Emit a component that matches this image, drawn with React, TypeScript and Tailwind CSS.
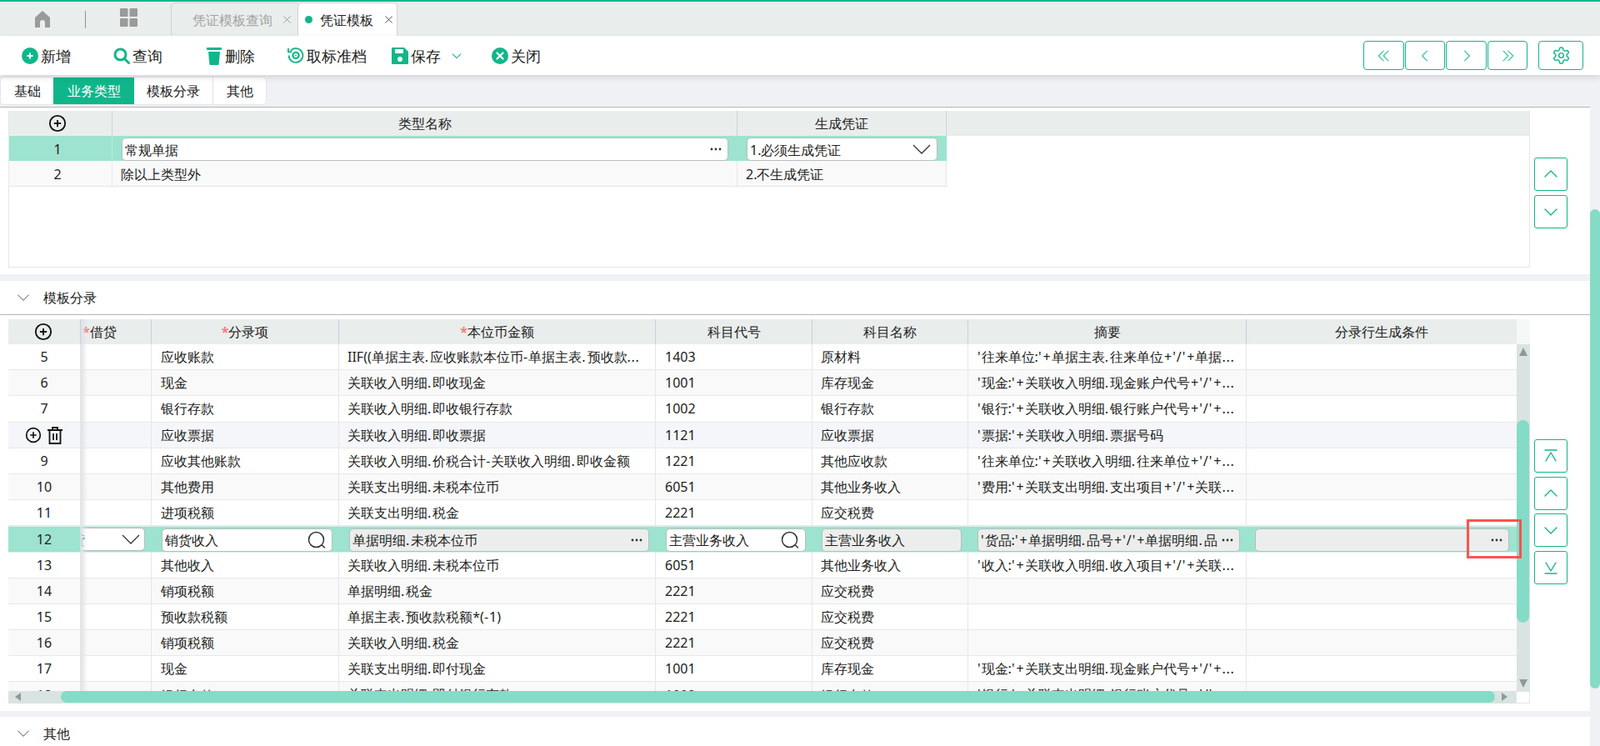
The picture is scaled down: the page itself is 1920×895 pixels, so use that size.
import React from "react";

const cols = "grid-cols-[87px_85px_225px_380px_188px_187px_334px_324px]";

type R = [string, string, string, string, string, string];
const rows: R[] = [
  ["5", "应收账款", "IIF((单据主表.应收账款本位币-单据主表.预收款...", "1403", "原材料", "'往来单位:'+单据主表.往来单位+'/'+单据..."],
  ["6", "现金", "关联收入明细.即收现金", "1001", "库存现金", "'现金:'+关联收入明细.现金账户代号+'/'+..."],
  ["7", "银行存款", "关联收入明细.即收银行存款", "1002", "银行存款", "'银行:'+关联收入明细.银行账户代号+'/'+..."],
  ["8", "应收票据", "关联收入明细.即收票据", "1121", "应收票据", "'票据:'+关联收入明细.票据号码"],
  ["9", "应收其他账款", "关联收入明细.价税合计-关联收入明细.即收金额", "1221", "其他应收款", "'往来单位:'+关联收入明细.往来单位+'/'+..."],
  ["10", "其他费用", "关联支出明细.未税本位币", "6051", "其他业务收入", "'费用:'+关联支出明细.支出项目+'/'+关联..."],
  ["11", "进项税额", "关联支出明细.税金", "2221", "应交税费", ""],
  ["12", "", "", "", "", ""],
  ["13", "其他收入", "关联收入明细.未税本位币", "6051", "其他业务收入", "'收入:'+关联收入明细.收入项目+'/'+关联..."],
  ["14", "销项税额", "单据明细.税金", "2221", "应交税费", ""],
  ["15", "预收款税额", "单据主表.预收款税额*(-1)", "2221", "应交税费", ""],
  ["16", "销项税额", "关联收入明细.税金", "2221", "应交税费", ""],
  ["17", "现金", "关联支出明细.即付现金", "1001", "库存现金", "'现金:'+关联支出明细.现金账户代号+'/'+..."],
  ["18", "银行存款", "关联支出明细.即付银行存款", "1002", "银行存款", "'银行:'+关联支出明细.银行账户代号+'/'+..."],
];

const Sym = ({ t }: { t: string }) => (
  <>
    {t.split(/(\.\.\.|\+|'|\/|\.|-)/).map((s, i) => {
      if (s === "+") return <span key={i} className="mx-px">{s}</span>;
      if (s === "'" || s === "/" || s === "-") return <span key={i} className="mr-px">{s}</span>;
      if (s === ".") return <span key={i} className="mr-[2px]">{s}</span>;
      if (s === "...") return <span key={i} className="tracking-[0.7px]">{s}</span>;
      return s;
    })}
  </>
);

const Line = ({ d, size = 20, sw = 1.4, color = "#19bd93" }: { d: string; size?: number; sw?: number; color?: string }) => (
  <svg width={size} height={size} viewBox="0 0 24 24" fill="none" stroke={color} strokeWidth={sw} strokeLinecap="round" strokeLinejoin="round">
    <path d={d} />
  </svg>
);

const PlusC = ({ size = 22 }: { size?: number }) => (
  <svg width={size} height={size} viewBox="0 0 24 24" fill="none" stroke="#111" strokeWidth="2">
    <circle cx="12" cy="12" r="10" />
    <path d="M12 7.5v9M7.5 12h9" />
  </svg>
);

const Dots = () => (
  <svg width="16" height="4" viewBox="0 0 16 4" fill="#333" className="shrink-0">
    <circle cx="3" cy="2" r="1.4" />
    <circle cx="8" cy="2" r="1.4" />
    <circle cx="13" cy="2" r="1.4" />
  </svg>
);

const Glass = () => (
  <svg width="24" height="24" viewBox="0 0 24 24" fill="none" stroke="#333" strokeWidth="1.5" strokeLinecap="round" className="shrink-0">
    <circle cx="11.5" cy="11.5" r="9" />
    <path d="M18.5 18l3 3" />
  </svg>
);

const Chev = ({ size = 24 }: { size?: number }) => (
  <svg width={size} height={size} viewBox="0 0 24 24" fill="none" stroke="#333" strokeWidth="1.3" className="shrink-0">
    <path d="M2 7l10 10 10-10" />
  </svg>
);

const Field = ({ x, w, grey, children }: { x: number; w: number; grey?: boolean; children?: React.ReactNode }) => (
  <div
    className={`absolute top-[2px] h-[28px] flex items-center pl-[3px] pr-[6px] gap-1 rounded-[5px] border border-[#b9bdbc] whitespace-nowrap overflow-hidden ${grey ? "bg-[#eceeed]" : "bg-white"}`}
    style={{ left: x, width: w }}
  >
    {children}
  </div>
);

const SideBtn = ({ d, top }: { d: string; top: number }) => (
  <button className="absolute left-[1841px] w-[40px] h-[40px] flex items-center justify-center rounded-[3px] border border-[#10b68a] bg-white" style={{ top }}>
    <Line d={d} size={24} sw={1.4} color="#10b68a" />
  </button>
);

const NavBtn = ({ d, w = "w-[49px]" }: { d: string; w?: string }) => (
  <button className={`${w} h-[35px] flex items-center justify-center rounded-[4px] border border-[#10b68a] bg-white`}>
    <Line d={d} size={20} sw={1.3} color="#2cc39b" />
  </button>
);

const Tool = ({ w, icon, label, extra }: { w: string; icon: React.ReactNode; label: string; extra?: React.ReactNode }) => (
  <div className={`${w} flex items-center h-full text-[18px] text-[#222]`}>
    <span className="w-[20px] h-[20px] mr-[3px] flex items-center justify-center shrink-0">{icon}</span>
    <span>{label}</span>
    {extra}
  </div>
);

const G = "#10b68a";

export default function App() {
  return (
    <div className="relative w-[1920px] h-[895px] overflow-hidden bg-[#eff1f5] text-[16px] leading-none text-[#222] font-['Noto_Sans_CJK_SC','Noto_Sans',sans-serif]">
      {/* tab strip */}
      <div className="h-[43px] border-t-[2px] border-[#10b68a] bg-[#e9edec] flex items-end">
        <svg className="ml-[41px] mb-[9px]" width="20" height="22" viewBox="0 0 20 22" fill="#9a9a9a">
          <path d="M10 1L1 9v12h6v-6a3 3 0 016 0v6h6V9z" />
        </svg>
        <div className="ml-[41px] mb-[9px] w-px h-[21px] bg-[#8f9392]" />
        <svg className="ml-[41px] mb-[11px]" width="21" height="22" viewBox="0 0 21 22" fill="#9a9a9a">
          <rect x="0" y="0" width="9.5" height="10" rx="1" />
          <rect x="11.5" y="0" width="9.5" height="10" rx="1" />
          <rect x="0" y="12" width="9.5" height="10" rx="1" />
          <rect x="11.5" y="12" width="9.5" height="10" rx="1" />
        </svg>
        <div className="ml-[40px] w-[152px] h-[40px] flex items-center pl-[25px] rounded-tl-[5px] border-l border-t border-[#d0d4d4] text-[#a1a3a3]">
          <span>凭证模板查询</span>
          <span className="ml-[11px]">
            <Line d="M5 5l14 14M19 5L5 19" size={13} sw={1.5} color="#888" />
          </span>
        </div>
        <div className="w-[120px] h-[40px] flex items-center pl-[8px] rounded-t-[5px] border-x border-t border-[#d0d4d4] bg-white text-[#222]">
          <span className="w-[9px] h-[9px] rounded-full bg-[#10b68a] mr-[9px]" />
          <span>凭证模板</span>
          <span className="ml-[12px]">
            <Line d="M5 5l14 14M19 5L5 19" size={13} sw={1.5} color="#333" />
          </span>
        </div>
      </div>

      {/* toolbar */}
      <div className="relative z-10 h-[47px] bg-white flex items-center pl-[26px] pr-[20px] shadow-[0_3px_7px_rgba(40,44,60,0.14)]">
        <Tool
          w="w-[110px]"
          label="新增"
          icon={
            <svg width="20" height="20" viewBox="0 0 20 20">
              <circle cx="10" cy="10" r="10" fill={G} />
              <path d="M10 6.5v7M6.5 10h7" stroke="#fff" strokeWidth="2" />
            </svg>
          }
        />
        <Tool
          w="w-[111px]"
          label="查询"
          icon={
            <svg width="20" height="20" viewBox="0 0 20 20" fill="none" stroke={G} strokeWidth="3" strokeLinecap="round">
              <circle cx="8.5" cy="8.5" r="6.5" />
              <path d="M13.5 13.5l5 5" />
            </svg>
          }
        />
        <Tool
          w="w-[98px]"
          label="删除"
          icon={
            <svg width="20" height="22" viewBox="0 0 20 22" fill={G}>
              <rect x="1" y="1" width="18" height="3" rx="1" />
              <path d="M3 6h14l-1.4 15a1 1 0 01-1 1H5.4a1 1 0 01-1-1z" />
            </svg>
          }
        />
        <Tool
          w="w-[125px]"
          label="取标准档"
          icon={
            <svg width="21" height="21" viewBox="0 0 21 21" fill="none" stroke={G} strokeWidth="2">
              <path d="M4 4.5A8.8 8.8 0 1 1 1.7 10.5" />
              <path d="M1 1.5V6h4.5" />
              <circle cx="10.5" cy="10.5" r="3.8" strokeWidth="2.4" />
              <circle cx="10.5" cy="10.5" r="1" fill={G} stroke="none" />
            </svg>
          }
        />
        <Tool
          w="w-[120px]"
          label="保存"
          icon={
            <svg width="20" height="20" viewBox="0 0 20 20">
              <path d="M1 0h14l5 5v14a1 1 0 01-1 1H1a1 1 0 01-1-1V1a1 1 0 011-1z" fill={G} />
              <rect x="4" y="2" width="10" height="5" fill="#fff" />
              <circle cx="10" cy="14" r="3" fill="#fff" />
            </svg>
          }
          extra={
            <span className="ml-[11px]">
              <Line d="M5 9l7 7 7-7" size={16} sw={1.6} color="#1fbf95" />
            </span>
          }
        />
        <Tool
          w="w-[100px]"
          label="关闭"
          icon={
            <svg width="20" height="20" viewBox="0 0 20 20">
              <circle cx="10" cy="10" r="10" fill={G} />
              <path d="M6.5 6.5l7 7M13.5 6.5l-7 7" stroke="#fff" strokeWidth="2.2" strokeLinecap="round" />
            </svg>
          }
        />
        <div className="ml-auto flex items-center gap-px">
          <NavBtn d="M11 5l-7 7 7 7M18 5l-7 7 7 7" />
          <NavBtn d="M15 5l-7 7 7 7" w="w-[48px]" />
          <NavBtn d="M9 5l7 7-7 7" w="w-[49px]" />
          <NavBtn d="M6 5l7 7-7 7M13 5l7 7-7 7" w="w-[48px]" />
          <button className="ml-[12px] w-[54px] h-[35px] flex items-center justify-center rounded-[4px] border border-[#10b68a] bg-white">
            <svg width="23" height="23" viewBox="0 0 24 24" fill="none" stroke="#10b68a" strokeWidth="1.5" strokeLinejoin="round">
              <path d="M12.22 2h-.44a2 2 0 0 0-2 2v.18a2 2 0 0 1-1 1.73l-.43.25a2 2 0 0 1-2 0l-.15-.08a2 2 0 0 0-2.73.73l-.22.38a2 2 0 0 0 .73 2.73l.15.1a2 2 0 0 1 1 1.72v.51a2 2 0 0 1-1 1.74l-.15.09a2 2 0 0 0-.73 2.73l.22.38a2 2 0 0 0 2.73.73l.15-.08a2 2 0 0 1 2 0l.43.25a2 2 0 0 1 1 1.73V20a2 2 0 0 0 2 2h.44a2 2 0 0 0 2-2v-.18a2 2 0 0 1 1-1.73l.43-.25a2 2 0 0 1 2 0l.15.08a2 2 0 0 0 2.73-.73l.22-.39a2 2 0 0 0-.73-2.73l-.15-.08a2 2 0 0 1-1-1.74v-.5a2 2 0 0 1 1-1.74l.15-.09a2 2 0 0 0 .73-2.73l-.22-.38a2 2 0 0 0-2.73-.73l-.15.08a2 2 0 0 1-2 0l-.43-.25a2 2 0 0 1-1-1.73V4a2 2 0 0 0-2-2z" />
              <circle cx="12" cy="12" r="3" />
            </svg>
          </button>
        </div>
      </div>

      {/* sub tabs */}
      <div className="h-[39px] w-[1908px] border-b border-[#b5b5b5] pt-[2px]">
        <div className="inline-flex h-[34px] items-stretch rounded-[5px] bg-white border border-[#e3e5e9] overflow-hidden">
          <div className="w-[63px] flex items-center justify-center">基础</div>
          <div className="w-[97px] flex items-center justify-center bg-[#10b68a] text-white">业务类型</div>
          <div className="w-[95px] flex items-center justify-center border-r border-[#e0e2e6]">模板分录</div>
          <div className="w-[63px] flex items-center justify-center">其他</div>
        </div>
      </div>

      {/* section one */}
      <div className="relative w-[1908px] h-[200px] bg-white">
        <div className="absolute left-[10px] top-[4px] w-[1826px] h-[188px] border-x border-b border-[#e6e6e6]">
          <div className="h-[30px] bg-[#e9edec] grid grid-cols-[124px_750px_251px] w-[1824px]">
            <div className="flex items-center justify-center pr-[7px] border-r border-[#ccd2dc]"><PlusC /></div>
            <div className="flex items-center justify-center border-r border-[#ccd2dc]">类型名称</div>
            <div className="flex items-center justify-center border-r border-[#ccd2dc]">生成凭证</div>
          </div>
          <div className="relative h-[30px] w-[1125px] bg-[#9de3cf]">
            <div className="w-[124px] h-full flex items-center justify-center pr-[7px] pt-[2px] border-r border-[#bfeadd]">1</div>
            <Field x={135} w={728}>
              <span className="flex-1 pt-[1px]">常规单据</span>
              <Dots />
            </Field>
            <Field x={885} w={229}>
              <span className="flex-1 pt-[1px]">1.必须生成凭证</span>
              <Chev />
            </Field>
          </div>
          <div className="h-[31px] w-[1125px] bg-[#f9f9f9] grid grid-cols-[124px_750px_251px] border-b border-[#e6e6e6]">
            <div className="flex items-center justify-center pr-[7px] pt-[2px] border-r border-[#e6e6e6]">2</div>
            <div className="flex items-center pl-[10px] pt-[2px] border-r border-[#e6e6e6]">除以上类型外</div>
            <div className="flex items-center pl-[10px] pt-[2px] border-r border-[#e6e6e6]">2.不生成凭证</div>
          </div>
        </div>
        <SideBtn top={60} d="M5 15l7-7 7 7" />
        <SideBtn top={105} d="M5 9l7 7 7-7" />
      </div>

      {/* section two */}
      <div className="absolute left-0 top-[337px] w-[1908px] h-[516px] bg-white">
        <div className="h-[41px] flex items-center border-b border-[#b5b5b5] pl-[20px]">
          <Chev size={16} />
          <span className="ml-[16px]">模板分录</span>
        </div>
      </div>

      <div className="absolute left-[10px] top-[383px] w-[1826px] h-[461px] overflow-hidden bg-white">
        {/* header */}
        <div className={`grid ${cols} h-[30px] bg-[#e9edec] w-[1810px]`}>
          <div className="flex items-center justify-center pr-[2px] border-r border-[#c9d0dc]"><PlusC /></div>
          <div className="flex items-center pl-[2px] border-r border-[#c9d0dc]"><span className="text-[#f87a7a] font-bold">*</span>借贷</div>
          <div className="flex items-center justify-center border-r border-[#c9d0dc]"><span className="text-[#f87a7a] font-bold">*</span>分录项</div>
          <div className="flex items-center justify-center border-r border-[#c9d0dc]"><span className="text-[#f87a7a] font-bold">*</span>本位币金额</div>
          <div className="flex items-center justify-center border-r border-[#c9d0dc]">科目代号</div>
          <div className="flex items-center justify-center border-r border-[#c9d0dc]">科目名称</div>
          <div className="flex items-center justify-center border-r border-[#c9d0dc]">摘要</div>
          <div className="flex items-center justify-center">分录行生成条件</div>
        </div>
        <div className="absolute left-[1810px] top-0 w-[16px] h-[30px] bg-[#f6f7f7]" />

        {/* rows */}
        <div className="w-[1810px] h-[416px] overflow-hidden">
          {rows.map((r, i) => {
            if (r[0] === "12") {
              return (
                <div key={r[0]} className="relative h-[31.2px] bg-[#9de3cf] border-y border-[#d6f2ea]">
                  <div className="w-[87px] h-full flex items-center justify-center border-r border-[#bfeadd]">12</div>
                  <div className="absolute left-[87px] top-0 w-[78px] h-full overflow-hidden">
                    <div className="absolute left-[-40px] top-[1px] w-[117px] h-[28px] flex items-center pl-[12px] pr-[4px] rounded-[5px] border border-[#b9bdbc] bg-white whitespace-nowrap">
                      <span className="flex-1">借贷</span>
                      <Chev />
                    </div>
                  </div>
                  <Field x={184} w={205}><span className="flex-1">销货收入</span><Glass /></Field>
                  <Field x={409} w={360} grey><span className="flex-1"><Sym t="单据明细.未税本位币" /></span><Dots /></Field>
                  <Field x={789} w={168}><span className="flex-1">主营业务收入</span><Glass /></Field>
                  <Field x={976} w={168} grey><span>主营业务收入</span></Field>
                  <Field x={1163} w={315} grey>
                    <span className="flex-1 overflow-hidden"><Sym t="'货品:'+单据明细.品号+'/'+单据明细.品" /></span>
                    <Dots />
                  </Field>
                  <Field x={1496} w={305} grey>
                    <span className="flex-1" />
                    <Dots />
                  </Field>
                </div>
              );
            }
            const bg = r[0] === "8" ? "bg-[#f4f6fa]" : i % 2 === 1 ? "bg-[#f9f9f9]" : "bg-white";
            return (
              <div key={r[0]} className={`grid ${cols} h-[31.2px] ${bg} border-b border-[#e8e8e8]`}>
                <div className="flex items-center justify-center gap-[6px] border-r border-[#e6e6e6]">
                  {r[0] === "8" ? (
                    <>
                      <PlusC size={20} />
                      <svg width="20" height="22" viewBox="0 0 20 22" fill="none" stroke="#111" strokeWidth="1.8">
                        <path d="M1 5h18M7 5V2h6v3M3.5 5v16h13V5M8 9v8M12 9v8" />
                      </svg>
                    </>
                  ) : (
                    r[0]
                  )}
                </div>
                <div className="border-r border-[#e6e6e6]" />
                <div className="flex items-center pl-[11px] whitespace-nowrap border-r border-[#e6e6e6]">{r[1]}</div>
                <div className="block pt-[7px] pl-[10px] whitespace-nowrap border-r border-[#e6e6e6]"><Sym t={r[2]} /></div>
                <div className="flex items-center pl-[11px] whitespace-nowrap border-r border-[#e6e6e6]">{r[3]}</div>
                <div className="flex items-center pl-[10px] whitespace-nowrap border-r border-[#e6e6e6]">{r[4]}</div>
                <div className="block pt-[7px] pl-[11px] whitespace-nowrap border-r border-[#e6e6e6]"><Sym t={r[5]} /></div>
                <div />
              </div>
            );
          })}
        </div>

        {/* frozen column shadow */}
        <div className="absolute left-[87px] top-0 w-[8px] h-[446px] bg-gradient-to-r from-[#dfe2e6] to-transparent" />

        {/* vertical bar */}
        <div className="absolute left-[1810px] top-[30px] w-[16px] h-[416px] bg-[#d9e3e1]">
          <div className="absolute left-[3px] top-[4px] w-0 h-0 border-x-[5px] border-x-transparent border-b-[10px] border-b-[#8f9a98]" />
          <div className="absolute left-[0] top-[91px] w-[15px] h-[243px] rounded-full bg-[#84dcc6]" />
          <div className="absolute left-[3px] bottom-[4px] w-0 h-0 border-x-[5px] border-x-transparent border-t-[10px] border-t-[#8f9a98]" />
        </div>

        {/* horizontal bar */}
        <div className="absolute left-0 top-[446px] w-[1809px] h-[15px] bg-[#d9e3e1]">
          <div className="absolute left-[8px] top-[2px] w-0 h-0 border-y-[5.5px] border-y-transparent border-r-[7px] border-r-[#8f9a98]" />
          <div className="absolute left-[63px] top-0 w-[1721px] h-[14px] rounded-full bg-[#84dcc6]" />
          <div className="absolute left-[1792px] top-[2px] w-0 h-0 border-y-[5.5px] border-y-transparent border-l-[7px] border-l-[#8f9a98]" />
        </div>
        <div className="absolute left-[1809px] top-[446px] w-[17px] h-[15px] bg-white border border-[#e3e6e6]" />
      </div>

      <SideBtn top={527} d="M5 5h14M6 18l6-10 6 10" />
      <SideBtn top={572} d="M5 15l7-7 7 7" />
      <SideBtn top={616} d="M5 9l7 7 7-7" />
      <SideBtn top={661} d="M6 6l6 10 6-10M5 19h14" />

      {/* red marker */}
      <div className="absolute left-[1760px] top-[623px] w-[66px] h-[47px] border-[3px] border-[#ff5252]" />

      {/* section three */}
      <div className="absolute left-0 top-[860px] w-[1908px] h-[35px] bg-white flex items-center pl-[20px] pt-[4px]">
        <Chev size={16} />
        <span className="ml-[16px]">其他</span>
      </div>

      {/* page scroll */}
      <div className="absolute left-[1908px] top-[251px] w-[12px] h-[575px] rounded-full bg-[#84dcc6]" />
    </div>
  );
}
